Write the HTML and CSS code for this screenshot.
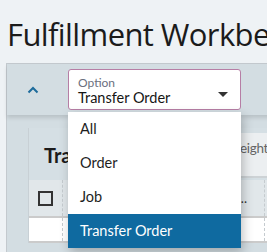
FILE: index.html
```html
<!DOCTYPE html>
<html lang="en">
<head>
  <meta charset="UTF-8">
  <title>Fulfillment Workbench</title>
  <link rel="stylesheet" href="styles.css">
</head>
<body>
  <h1 class="page-title">Fulfillment Workbench</h1>

  <div class="panel">
    <div class="panel-head">
      <button class="collapse-btn" aria-label="Collapse">
        <svg width="12" height="8" viewBox="0 0 12 8"><path d="M1.5 6.5 L6 2 L10.5 6.5" fill="none" stroke="#1d6b9b" stroke-width="2"/></svg>
      </button>

      <div class="select-wrap">
        <div class="select-box">
          <span class="select-label">Option</span>
          <span class="select-value">Transfer Order</span>
          <span class="select-arrow"></span>
        </div>

        <!-- open menu -->
        <ul class="select-menu">
          <li>All</li>
          <li>Order</li>
          <li>Job</li>
          <li class="active">Transfer Order</li>
        </ul>
      </div>
    </div>

    <div class="panel-body">
      <div class="card">
        <div class="card-head">
          <span class="card-title">Transfer Orders</span>
          <span class="card-tools">Weight</span>
        </div>
        <table class="grid">
          <tr class="grid-head">
            <th class="col-check"><span class="checkbox"></span></th>
            <th class="col-name">Name</th>
            <th class="col-more">...</th>
            <th class="col-rest"></th>
          </tr>
          <tr class="grid-row">
            <td class="col-check"></td>
            <td></td>
            <td></td>
            <td></td>
          </tr>
        </table>
      </div>
    </div>
  </div>
</body>
</html>
```

FILE: styles.css
```css
html {
  overflow: hidden;
}

body {
  margin: 0;
  background-color: #eef2f5;
  font-family: Lato, 'Open Sans', sans-serif;
  color: #1b1b1b;
  overflow: hidden;
  width: 267px;
  height: 252px;
}

.page-title {
  font-family: 'Open Sans', sans-serif;
  font-size: 31px;
  font-weight: 400;
  line-height: 40px;
  margin: 14px 0 9px 7px;
  white-space: nowrap;
  letter-spacing: -0.6px;
}

.panel {
  margin-left: 6px;
  width: 420px;
  background-color: #d3dde2;
  border: 1px solid #c3c9ce;
  border-right: none;
}

.panel-head {
  display: flex;
  align-items: flex-start;
  height: 51px;
  padding-top: 5px;
  box-sizing: border-box;
  box-shadow: 0 3px 4px rgba(0,0,0,0.12);
  position: relative;
  z-index: 2;
}

.collapse-btn {
  width: 61px;
  height: 41px;
  background: none;
  border: none;
  padding: 0 0 0 20px;
  display: flex;
  align-items: center;
  justify-content: flex-start;
}

.select-wrap {
  position: relative;
  width: 173px;
}

.select-box {
  height: 41px;
  box-sizing: border-box;
  background-color: #fff;
  border: 1px solid #b67ea5;
  border-radius: 3px;
  padding: 6px 10px 0 9px;
  display: flex;
  flex-direction: column;
  position: relative;
}

.select-label {
  font-size: 12px;
  line-height: 13px;
  color: #6b6f7e;
}

.select-value {
  font-size: 14.5px;
  line-height: 18px;
  color: #151515;
}

.select-arrow {
  position: absolute;
  right: 12px;
  top: 22px;
  border-left: 5px solid transparent;
  border-right: 5px solid transparent;
  border-top: 5px solid #333;
}

.select-menu {
  position: absolute;
  top: 43px;
  left: 0;
  width: 173px;
  margin: 0;
  padding: 0;
  list-style: none;
  background-color: #fff;
  box-shadow: 2px 4px 10px rgba(0,0,0,0.25);
  z-index: 5;
}

.select-menu li {
  height: 34px;
  line-height: 34px;
  padding-left: 12px;
  font-size: 14.5px;
  color: #1e1e1e;
}

.select-menu li.active {
  background-color: #0f6aa0;
  color: #fff;
}

.panel-body {
  padding: 13px 0 0 21px;
  height: 200px;
}

.card {
  background-color: #d5dfe4;
  border-left: 1px solid #c8d0d5;
}

.card-head {
  height: 52px;
  display: flex;
  align-items: flex-start;
}

.card-title {
  width: 188px;
  box-sizing: border-box;
  font-size: 20px;
  font-weight: 700;
  padding: 15px 0 0 15px;
  white-space: nowrap;
  overflow: hidden;
}

.card-tools {
  background-color: #eceff1;
  color: #666;
  font-size: 13.5px;
  letter-spacing: -0.3px;
  height: 45px;
  line-height: 30px;
  width: 200px;
  padding-left: 10px;
  box-sizing: border-box;
  margin-top: 5px;
  border-bottom: 2px solid #cdd2d5;
}

.grid {
  border-collapse: collapse;
  width: 100%;
  table-layout: fixed;
}

.grid th, .grid td {
  padding: 0;
  border-right: 1px dashed #c5cbcf;
}

.grid-head {
  height: 37px;
  background-color: #e1e7ea;
  border-bottom: 2px solid #cbcbcb;
}

.grid-row {
  height: 25px;
  background-color: #fff;
  border-bottom: 2px solid #cbcbcb;
}

.col-check { width: 33px; }
.col-name { width: 148px; }

.grid .col-more {
  width: 35px;
  font-weight: 400;
  color: #333;
  text-align: right;
  padding-right: 17px;
  font-size: 13px;
}

.checkbox {
  display: block;
  width: 11px;
  height: 11px;
  border: 2.5px solid #333;
  margin: 0 auto;
}
```
